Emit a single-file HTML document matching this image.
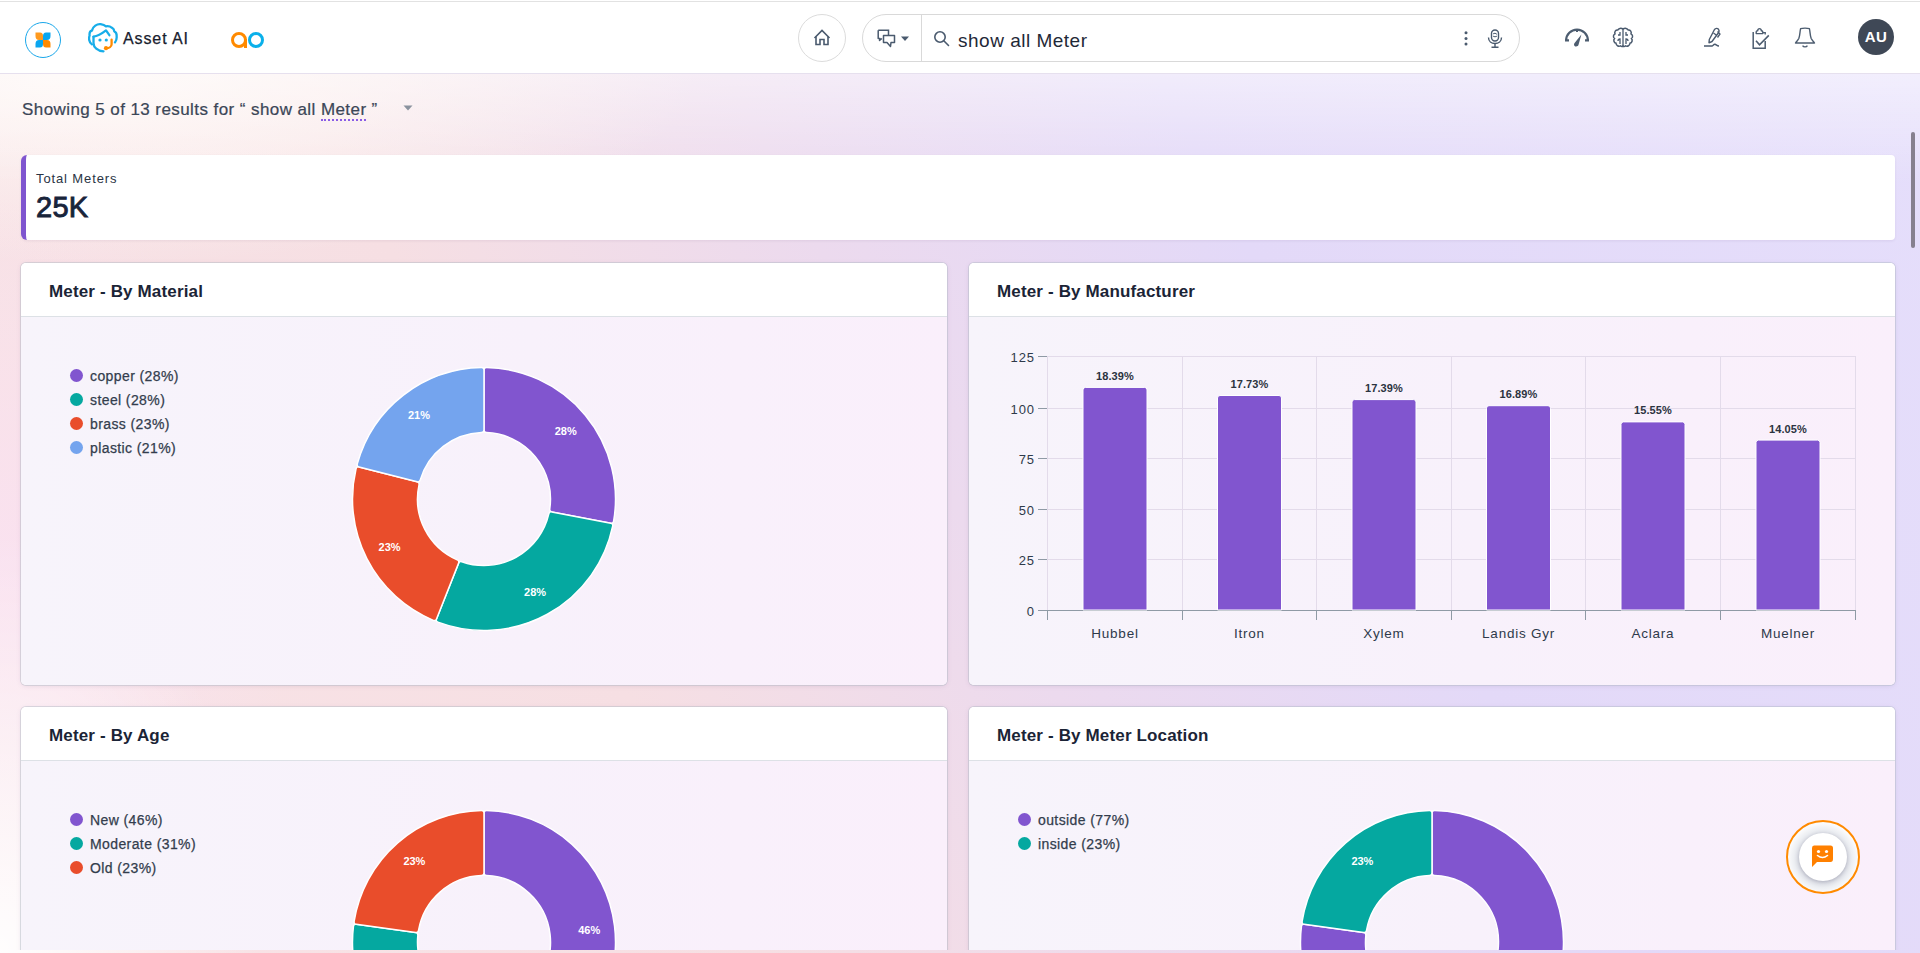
<!DOCTYPE html>
<html><head><meta charset="utf-8"><style>
*{box-sizing:border-box}
html,body{margin:0;padding:0;width:1920px;height:953px;overflow:hidden;font-family:"Liberation Sans", sans-serif;}
body{position:relative;background:#fff}
.abs{position:absolute}
#bg{position:absolute;left:0;top:74px;width:1920px;height:879px;
 background:
  linear-gradient(180deg,rgba(255,255,255,.5) 0px,rgba(255,255,255,0) 110px),
  radial-gradient(ellipse 260px 420px at 0px 879px,rgba(255,255,255,.95),rgba(255,255,255,0)),
  radial-gradient(ellipse 300px 380px at 0px 500px,rgba(250,225,242,.8),rgba(250,225,242,0)),
  radial-gradient(ellipse 600px 190px at 100px 0px,rgba(254,248,245,.95),rgba(254,248,245,0)),
  linear-gradient(62deg,#f9e4e7 0%,#f6dfe3 32%,#ecdaee 50%,#e3d9f8 68%,#e5defb 100%);}
#hdr{position:absolute;left:0;top:0;width:1920px;height:74px;background:#fff;border-bottom:1px solid #e6e0ee}
#topline{position:absolute;left:0;top:1px;width:1920px;height:1px;background:#e2e2e2}
#clip{position:absolute;left:0;top:74px;width:1920px;height:876px;overflow:hidden}
.card{position:absolute;background:#fff;border-radius:5px;box-shadow:0 0 0 1px rgba(175,185,195,.42),0 1px 5px rgba(110,70,120,.13);overflow:hidden}
.ch{position:absolute;left:0;top:0;right:0;height:54px;background:#fff;border-bottom:1px solid #dde1e6}
.ct{position:absolute;left:28px;top:19px;font-size:17px;font-weight:700;color:#1b2436;white-space:nowrap;letter-spacing:.15px}
.cb{position:absolute;left:0;top:54px;right:0;bottom:0;background:linear-gradient(90deg,#f7f4fb 0%,#f8f1fb 55%,#faeffb 100%)}
.leg{position:absolute;font-size:14px;color:#333d4d;white-space:nowrap;letter-spacing:.4px;-webkit-text-stroke:.25px #333d4d}
.leg i{position:absolute;left:-20px;top:1px;width:13px;height:13px;border-radius:50%}
svg text{font-family:"Liberation Sans", sans-serif}
</style></head><body>
<div id="bg"></div>
<div id="hdr"></div>
<div id="topline"></div>


<!-- launcher -->
<div class="abs" style="left:25px;top:22px;width:36px;height:36px;border:1.5px solid #1aa7ea;border-radius:50%"></div>
<svg class="abs" style="left:35px;top:32px" width="16" height="16" viewBox="0 0 16 16">
 <path d="M0.5,0.5 H5 Q8,0.5 8,4 V8 H4 Q0.5,8 0.5,4 Z" fill="#ff9a1f"/>
 <path d="M15.5,0.5 H11 Q8,0.5 8,4 V8 H12 Q15.5,8 15.5,4 Z" fill="#0aa6f0"/>
 <path d="M0.5,15.5 H5 Q8,15.5 8,12 V8 H4 Q0.5,8 0.5,12 Z" fill="#0aa6f0"/>
 <path d="M15.5,15.5 H11 Q8,15.5 8,12 V8 H12 Q15.5,8 15.5,12 Z" fill="#ff8a00"/>
</svg>
<!-- asset ai logo -->
<svg class="abs" style="left:88px;top:23px" width="30" height="30" viewBox="0 0 30 30">
 <path d="M3.9,21.4 C1,19.5 0.6,15 1.6,12.6 C1.2,9.5 2.3,8 3.9,7.6 C5,3.2 9,0.8 12.6,1.2 C14.5,1.5 16.5,2 18,3.3 C20,3 22.5,3.6 24,4.8 C25.8,6 26.3,7 26.2,8.2 C28,9.2 28.8,11 28.6,12.8 C28.9,15.2 28.4,17.5 27,19.4" fill="none" stroke="#17ade9" stroke-width="2.3" stroke-linecap="round" stroke-linejoin="round"/>
 <path d="M5.5,13.8 V20 C5.5,24.2 9.5,28 15.5,28.3" fill="none" stroke="#17ade9" stroke-width="2.3" stroke-linecap="round"/>
 <path d="M5.4,13.7 C10,13.1 14,10.5 18,7.4 L21.4,12.2" fill="none" stroke="#17ade9" stroke-width="2.3" stroke-linecap="round" stroke-linejoin="round"/>
 <circle cx="12" cy="17" r="1.6" fill="#17ade9"/><circle cx="18.3" cy="17" r="1.6" fill="#17ade9"/>
 <path d="M23.6,16.6 V21.2 C23.6,23.6 21,25.2 18.2,25.2" fill="none" stroke="#ff8a00" stroke-width="2.3" stroke-linecap="round"/>
 <circle cx="18" cy="25.2" r="2.1" fill="#ff8a00"/>
</svg>
<div class="abs" style="left:123px;top:30px;font-size:16px;line-height:18px;color:#18202e;letter-spacing:.9px;white-space:nowrap;-webkit-text-stroke:.25px #18202e">Asset AI</div>
<!-- ao logo -->
<svg class="abs" style="left:230px;top:31px" width="36" height="18" viewBox="0 0 36 18">
 <circle cx="9" cy="9" r="6.5" fill="none" stroke="#ff8a00" stroke-width="3"/>
 <rect x="14" y="8" width="3" height="9" fill="#ff8a00"/>
 <circle cx="26" cy="9" r="6.5" fill="none" stroke="#0ab0ea" stroke-width="3"/>
</svg>


<!-- home -->
<div class="abs" style="left:798px;top:14px;width:48px;height:48px;border:1px solid #dcdcdc;border-radius:50%;background:#fff"></div>
<svg class="abs" style="left:812px;top:28px" width="20" height="20" viewBox="0 0 20 20">
 <path d="M2.5,10 L10,2.5 L17.5,10" fill="none" stroke="#4a5a6e" stroke-width="1.6" stroke-linejoin="miter"/>
 <path d="M4,8.5 V16.5 H8 V11.5 H12 V16.5 H16 V8.5" fill="none" stroke="#4a5a6e" stroke-width="1.6"/>
</svg>
<!-- search pill -->
<div class="abs" style="left:862px;top:14px;width:658px;height:48px;border:1px solid #d9d9d9;border-radius:24px;background:#fff"></div>
<div class="abs" style="left:921px;top:15px;width:1px;height:46px;background:#d9d9d9"></div>
<svg class="abs" style="left:877px;top:29px" width="20" height="20" viewBox="0 0 20 20">
 <path d="M1.2,1.2 H11.5 V6" fill="none" stroke="#4a5a6e" stroke-width="1.5"/>
 <path d="M1.2,1.2 V9.5 H3 L2.5,11.5 L5,9.5" fill="none" stroke="#4a5a6e" stroke-width="1.5" stroke-linejoin="round"/>
 <path d="M6.5,6.5 H17.5 V13.5 H14 L13.5,17.5 L10,13.5 H6.5 Z" fill="none" stroke="#4a5a6e" stroke-width="1.5" stroke-linejoin="round"/>
</svg>
<svg class="abs" style="left:900px;top:36px" width="10" height="6" viewBox="0 0 10 6"><path d="M1,0.5 H9 L5,5 Z" fill="#4a5a6e"/></svg>
<svg class="abs" style="left:933px;top:30px" width="17" height="17" viewBox="0 0 17 17">
 <circle cx="7" cy="7" r="5.2" fill="none" stroke="#4a5a6e" stroke-width="1.6"/>
 <path d="M10.8,10.8 L15.5,15.5" stroke="#4a5a6e" stroke-width="1.6" stroke-linecap="round"/>
</svg>
<div class="abs" style="left:958px;top:30px;font-size:19px;line-height:22px;color:#1f2937;letter-spacing:.5px;white-space:nowrap">show all Meter</div>
<svg class="abs" style="left:1462px;top:30px" width="8" height="17" viewBox="0 0 8 17">
 <circle cx="4" cy="2.8" r="1.5" fill="#4a5a6e"/><circle cx="4" cy="8.4" r="1.5" fill="#4a5a6e"/><circle cx="4" cy="14" r="1.5" fill="#4a5a6e"/>
</svg>
<svg class="abs" style="left:1486px;top:29px" width="18" height="20" viewBox="0 0 18 20">
 <rect x="5.5" y="1" width="7" height="11" rx="3.5" fill="none" stroke="#4a5a6e" stroke-width="1.4"/>
 <path d="M2.5,8.5 C2.5,12.5 5.5,14.5 9,14.5 C12.5,14.5 15.5,12.5 15.5,8.5" fill="none" stroke="#4a5a6e" stroke-width="1.4"/>
 <path d="M9,14.5 V18.3 M5.5,18.3 H12.5" stroke="#4a5a6e" stroke-width="1.4"/>
 <path d="M7,5 C8,4 10,4 11,5.5 M7,7 C8,8 10,8 11,7" fill="none" stroke="#4a5a6e" stroke-width="1"/>
</svg>
<!-- gauge -->
<svg class="abs" style="left:1564px;top:26px" width="26" height="22" viewBox="0 0 26 22">
 <path d="M2.1,14.5 A10.9,10.9 0 0 1 23.9,14.5" fill="none" stroke="#4d5d70" stroke-width="2.2"/>
 <path d="M1,14.4 H5 M21,14.4 H25" stroke="#4d5d70" stroke-width="2.2"/>
 <path d="M13,3.5 V6" stroke="#4d5d70" stroke-width="2"/>
 <path d="M17.4,8.6 L14.6,18.6 C14,21.4 9.8,21.2 10,18.3 C10.1,17.4 10.6,16.8 11.2,16.2 Z" fill="#4d5d70"/>
</svg>
<!-- brain -->
<svg class="abs" style="left:1612px;top:27px" width="22" height="21" viewBox="0 0 22 21">
 <path d="M11,2 C9,0.8 6.5,1.3 5.8,3 C3.5,2.8 2.2,5 3,6.8 C1,7.8 1,10.5 2.5,11.5 C1.2,13 1.8,15.8 4,16.2 C4.2,18.5 6.5,19.8 8.5,18.8 C9.5,19.8 10.5,19.8 11,19 C11.5,19.8 12.5,19.8 13.5,18.8 C15.5,19.8 17.8,18.5 18,16.2 C20.2,15.8 20.8,13 19.5,11.5 C21,10.5 21,7.8 19,6.8 C19.8,5 18.5,2.8 16.2,3 C15.5,1.3 13,0.8 11,2 Z" fill="none" stroke="#4a5a6e" stroke-width="1.5"/>
 <path d="M11,2 V19 M8,5 V8 H6 M14,5 V8 H16 M8,17 V12 C6.5,12 6,13.5 6,14 M14,17 V12 C15.5,12 16,13.5 16,14" fill="none" stroke="#4a5a6e" stroke-width="1.3"/>
</svg>
<!-- pen -->
<svg class="abs" style="left:1703px;top:27px" width="20" height="21" viewBox="0 0 20 21">
 <path d="M11.5,2.5 C12.5,1 14.5,1 15.5,2.3 C16.5,3.5 16,5 15.3,6 L9,14.5 L6,15.8 L6.3,12.5 Z" fill="none" stroke="#4a5a6e" stroke-width="1.4" stroke-linejoin="round"/>
 <path d="M14.5,4.5 L17,7 L14.5,10.5 M10.5,6 L13.5,8.2" fill="none" stroke="#4a5a6e" stroke-width="1.3"/>
 <path d="M1,19 H9 C10,19 10.5,17 12,17.2 C13,17.4 14,19 16,19" fill="none" stroke="#4a5a6e" stroke-width="1.4"/>
</svg>
<!-- clipboard -->
<svg class="abs" style="left:1751px;top:27px" width="19" height="23" viewBox="0 0 19 23">
 <path d="M2.2,5 V21.3 H14.2 V14" fill="none" stroke="#4d5d70" stroke-width="1.5"/>
 <path d="M11.8,5.6 H14.2 V7.5" fill="none" stroke="#4d5d70" stroke-width="1.4"/>
 <path d="M5.2,6.6 V5 C5.2,4 5.8,3.8 6.6,3.8 C6.8,2.2 7.6,1.6 8.5,1.6 C9.4,1.6 10.2,2.2 10.4,3.8 C11.2,3.8 11.8,4 11.8,5 V6.6 Z" fill="none" stroke="#4d5d70" stroke-width="1.4" stroke-linejoin="round"/>
 <path d="M5,13.8 L8.5,17.8 L17.8,8.4" fill="none" stroke="#4d5d70" stroke-width="1.6"/>
</svg>
<!-- bell -->
<svg class="abs" style="left:1794px;top:27px" width="22" height="23" viewBox="0 0 22 23">
 <path d="M6.6,1.6 C8.5,0.9 13.5,0.9 15.4,1.6 C16.2,4.5 15.9,8.2 17.2,11.5 C18,13.3 19.6,14.5 20.5,16 H1.5 C2.4,14.5 4,13.3 4.8,11.5 C6.1,8.2 5.8,4.5 6.6,1.6 Z" fill="none" stroke="#4d5d70" stroke-width="1.4" stroke-linejoin="round"/>
 <path d="M8.6,18.6 C9.6,20.3 12.4,20.3 13.4,18.6" fill="none" stroke="#4d5d70" stroke-width="1.4"/>
</svg>
<!-- avatar -->
<div class="abs" style="left:1858px;top:19px;width:36px;height:36px;border-radius:50%;background:#3f4856;color:#fff;font-size:15px;font-weight:700;line-height:36px;text-align:center;letter-spacing:.3px">AU</div>

<div id="clip"><div class="abs" style="left:22px;top:26px;font-size:17px;line-height:20px;color:#3b4657;white-space:nowrap;letter-spacing:.42px;-webkit-text-stroke:.22px #3b4657">Showing 5 of 13 results for “ show all <span style="border-bottom:2px dotted #8a5ce6;padding-bottom:0px">Meter</span> ”</div>
<svg class="abs" style="left:403px;top:31px" width="10" height="6" viewBox="0 0 10 6"><path d="M0.5,0.5 H9.5 L5,5.5 Z" fill="#8a929e"/></svg>

<div class="abs" style="left:21px;top:81px;width:1874px;height:85px;background:#fff;border-radius:6px 4px 4px 6px;border-left:5px solid #7f55cf;box-shadow:0 1px 3px rgba(60,40,90,.08)"></div>
<div class="abs" style="left:36px;top:97px;font-size:13px;line-height:16px;color:#2a3444;letter-spacing:.88px;white-space:nowrap">Total Meters</div>
<div class="abs" style="left:36px;top:117px;font-size:29px;line-height:32px;color:#18243a;font-weight:400;-webkit-text-stroke:.9px #18243a;letter-spacing:.3px;white-space:nowrap">25K</div>

<div class="card" style="left:21px;top:189px;width:926px;height:422px">
<div class="ch"><div class="ct">Meter - By Material</div></div>
<div class="cb"><div class="leg" style="left:69px;top:51px"><i style="background:#8155cf"></i>copper (28%)</div><div class="leg" style="left:69px;top:75px"><i style="background:#05a8a0"></i>steel (28%)</div><div class="leg" style="left:69px;top:99px"><i style="background:#e94d2b"></i>brass (23%)</div><div class="leg" style="left:69px;top:123px"><i style="background:#74a4ee"></i>plastic (21%)</div><svg class="abs" style="left:0;top:0" width="926" height="367"><path d="M463.00,53.00 Q463.00,50.50 465.50,50.52 A131.5,131.5 0 0 1 592.62,204.18 Q592.17,206.64 589.72,206.17 L530.78,194.93 Q528.32,194.46 528.74,192.00 A66.5,66.5 0 0 0 465.50,115.55 Q463.00,115.50 463.00,113.00 Z" fill="#8155cf" stroke="#fff" stroke-width="1.5" stroke-linejoin="round"/>
<text x="544.7" y="118.4" text-anchor="middle" font-size="11" font-weight="700" fill="#fff">28%</text>
<path d="M589.72,206.17 Q592.17,206.64 591.68,209.09 A131.5,131.5 0 0 1 416.92,305.16 Q414.59,304.27 415.51,301.94 L437.60,246.15 Q438.52,243.83 440.86,244.71 A66.5,66.5 0 0 0 527.81,196.91 Q528.32,194.46 530.78,194.93 Z" fill="#05a8a0" stroke="#fff" stroke-width="1.5" stroke-linejoin="round"/>
<text x="514.1" y="278.9" text-anchor="middle" font-size="11" font-weight="700" fill="#fff">28%</text>
<path d="M415.51,301.94 Q414.59,304.27 412.28,303.32 A131.5,131.5 0 0 1 335.03,151.72 Q335.63,149.30 338.05,149.92 L396.17,164.84 Q398.59,165.46 398.01,167.89 A66.5,66.5 0 0 0 436.21,242.87 Q438.52,243.83 437.60,246.15 Z" fill="#e94d2b" stroke="#fff" stroke-width="1.5" stroke-linejoin="round"/>
<text x="368.6" y="234.1" text-anchor="middle" font-size="11" font-weight="700" fill="#fff">23%</text>
<path d="M338.05,149.92 Q335.63,149.30 336.28,146.88 A131.5,131.5 0 0 1 460.50,50.52 Q463.00,50.50 463.00,53.00 L463.00,113.00 Q463.00,115.50 460.50,115.55 A66.5,66.5 0 0 0 399.26,163.05 Q398.59,165.46 396.17,164.84 Z" fill="#74a4ee" stroke="#fff" stroke-width="1.5" stroke-linejoin="round"/>
<text x="398.0" y="102.2" text-anchor="middle" font-size="11" font-weight="700" fill="#fff">21%</text></svg></div></div>
<div class="card" style="left:969px;top:189px;width:926px;height:422px">
<div class="ch"><div class="ct">Meter - By Manufacturer</div></div>
<div class="cb"><svg class="abs" style="left:0;top:0" width="926" height="367"><line x1="69" y1="293.5" x2="79" y2="293.5" stroke="#8f9aa5" stroke-width="1"/><text x="66" y="298.5" text-anchor="end" font-size="13" fill="#2e3a4a" letter-spacing=".9">0</text><line x1="78.5" y1="242.5" x2="886.5" y2="242.5" stroke="#e3dbea" stroke-width="1"/><line x1="69" y1="242.5" x2="79" y2="242.5" stroke="#8f9aa5" stroke-width="1"/><text x="66" y="247.5" text-anchor="end" font-size="13" fill="#2e3a4a" letter-spacing=".9">25</text><line x1="78.5" y1="192.5" x2="886.5" y2="192.5" stroke="#e3dbea" stroke-width="1"/><line x1="69" y1="192.5" x2="79" y2="192.5" stroke="#8f9aa5" stroke-width="1"/><text x="66" y="197.5" text-anchor="end" font-size="13" fill="#2e3a4a" letter-spacing=".9">50</text><line x1="78.5" y1="141.5" x2="886.5" y2="141.5" stroke="#e3dbea" stroke-width="1"/><line x1="69" y1="141.5" x2="79" y2="141.5" stroke="#8f9aa5" stroke-width="1"/><text x="66" y="146.5" text-anchor="end" font-size="13" fill="#2e3a4a" letter-spacing=".9">75</text><line x1="78.5" y1="91.5" x2="886.5" y2="91.5" stroke="#e3dbea" stroke-width="1"/><line x1="69" y1="91.5" x2="79" y2="91.5" stroke="#8f9aa5" stroke-width="1"/><text x="66" y="96.5" text-anchor="end" font-size="13" fill="#2e3a4a" letter-spacing=".9">100</text><line x1="78.5" y1="39.5" x2="886.5" y2="39.5" stroke="#e3dbea" stroke-width="1"/><line x1="69" y1="39.5" x2="79" y2="39.5" stroke="#8f9aa5" stroke-width="1"/><text x="66" y="44.5" text-anchor="end" font-size="13" fill="#2e3a4a" letter-spacing=".9">125</text><line x1="78.5" y1="39" x2="78.5" y2="293" stroke="#e3dbea" stroke-width="1"/><line x1="78.5" y1="293" x2="78.5" y2="303" stroke="#8f9aa5" stroke-width="1"/><line x1="213.5" y1="39" x2="213.5" y2="293" stroke="#e3dbea" stroke-width="1"/><line x1="213.5" y1="293" x2="213.5" y2="303" stroke="#8f9aa5" stroke-width="1"/><line x1="347.5" y1="39" x2="347.5" y2="293" stroke="#e3dbea" stroke-width="1"/><line x1="347.5" y1="293" x2="347.5" y2="303" stroke="#8f9aa5" stroke-width="1"/><line x1="482.5" y1="39" x2="482.5" y2="293" stroke="#e3dbea" stroke-width="1"/><line x1="482.5" y1="293" x2="482.5" y2="303" stroke="#8f9aa5" stroke-width="1"/><line x1="616.5" y1="39" x2="616.5" y2="293" stroke="#e3dbea" stroke-width="1"/><line x1="616.5" y1="293" x2="616.5" y2="303" stroke="#8f9aa5" stroke-width="1"/><line x1="751.5" y1="39" x2="751.5" y2="293" stroke="#e3dbea" stroke-width="1"/><line x1="751.5" y1="293" x2="751.5" y2="303" stroke="#8f9aa5" stroke-width="1"/><line x1="886.5" y1="39" x2="886.5" y2="293" stroke="#e3dbea" stroke-width="1"/><line x1="886.5" y1="293" x2="886.5" y2="303" stroke="#8f9aa5" stroke-width="1"/><line x1="69" y1="293.5" x2="887" y2="293.5" stroke="#8f9aa5" stroke-width="1"/><path d="M114.0,293 V72.9 Q114.0,70.4 116.5,70.4 H175.5 Q178.0,70.4 178.0,72.9 V293 Z" fill="#8155cf" stroke="#fff" stroke-width="1"/><text x="146.0" y="62.9" text-anchor="middle" font-size="11" font-weight="700" fill="#2b3340" letter-spacing=".1">18.39%</text><text x="146.0" y="321" text-anchor="middle" font-size="13.5" fill="#2e3a4a" letter-spacing=".75">Hubbel</text><path d="M248.5,293 V81.0 Q248.5,78.5 251.0,78.5 H310.0 Q312.5,78.5 312.5,81.0 V293 Z" fill="#8155cf" stroke="#fff" stroke-width="1"/><text x="280.5" y="71.0" text-anchor="middle" font-size="11" font-weight="700" fill="#2b3340" letter-spacing=".1">17.73%</text><text x="280.5" y="321" text-anchor="middle" font-size="13.5" fill="#2e3a4a" letter-spacing=".75">Itron</text><path d="M383.0,293 V85.1 Q383.0,82.6 385.5,82.6 H444.5 Q447.0,82.6 447.0,85.1 V293 Z" fill="#8155cf" stroke="#fff" stroke-width="1"/><text x="415.0" y="75.1" text-anchor="middle" font-size="11" font-weight="700" fill="#2b3340" letter-spacing=".1">17.39%</text><text x="415.0" y="321" text-anchor="middle" font-size="13.5" fill="#2e3a4a" letter-spacing=".75">Xylem</text><path d="M517.5,293 V91.2 Q517.5,88.7 520.0,88.7 H579.0 Q581.5,88.7 581.5,91.2 V293 Z" fill="#8155cf" stroke="#fff" stroke-width="1"/><text x="549.5" y="81.2" text-anchor="middle" font-size="11" font-weight="700" fill="#2b3340" letter-spacing=".1">16.89%</text><text x="549.5" y="321" text-anchor="middle" font-size="13.5" fill="#2e3a4a" letter-spacing=".75">Landis Gyr</text><path d="M652.0,293 V107.4 Q652.0,104.9 654.5,104.9 H713.5 Q716.0,104.9 716.0,107.4 V293 Z" fill="#8155cf" stroke="#fff" stroke-width="1"/><text x="684.0" y="97.4" text-anchor="middle" font-size="11" font-weight="700" fill="#2b3340" letter-spacing=".1">15.55%</text><text x="684.0" y="321" text-anchor="middle" font-size="13.5" fill="#2e3a4a" letter-spacing=".75">Aclara</text><path d="M787.0,293 V125.6 Q787.0,123.1 789.5,123.1 H848.5 Q851.0,123.1 851.0,125.6 V293 Z" fill="#8155cf" stroke="#fff" stroke-width="1"/><text x="819.0" y="115.6" text-anchor="middle" font-size="11" font-weight="700" fill="#2b3340" letter-spacing=".1">14.05%</text><text x="819.0" y="321" text-anchor="middle" font-size="13.5" fill="#2e3a4a" letter-spacing=".75">Muelner</text></svg></div></div>
<div class="card" style="left:21px;top:633px;width:926px;height:422px">
<div class="ch"><div class="ct">Meter - By Age</div></div>
<div class="cb"><div class="leg" style="left:69px;top:51px"><i style="background:#8155cf"></i>New (46%)</div><div class="leg" style="left:69px;top:75px"><i style="background:#05a8a0"></i>Moderate (31%)</div><div class="leg" style="left:69px;top:99px"><i style="background:#e94d2b"></i>Old (23%)</div><svg class="abs" style="left:0;top:0" width="926" height="367"><path d="M463.00,52.00 Q463.00,49.50 465.50,49.52 A131.5,131.5 0 0 1 497.32,307.94 Q494.90,308.57 494.30,306.15 L479.74,247.94 Q479.13,245.51 481.55,244.86 A66.5,66.5 0 0 0 465.50,114.55 Q463.00,114.50 463.00,112.00 Z" fill="#8155cf" stroke="#fff" stroke-width="1.5" stroke-linejoin="round"/>
<text x="568.2" y="173.0" text-anchor="middle" font-size="11" font-weight="700" fill="#fff">46%</text>
<path d="M494.30,306.15 Q494.90,308.57 492.47,309.16 A131.5,131.5 0 0 1 332.43,165.36 Q332.75,162.88 335.23,163.23 L394.66,171.49 Q397.13,171.84 396.84,174.32 A66.5,66.5 0 0 0 476.70,246.07 Q479.13,245.51 479.74,247.94 Z" fill="#05a8a0" stroke="#fff" stroke-width="1.5" stroke-linejoin="round"/>
<text x="392.2" y="262.8" text-anchor="middle" font-size="11" font-weight="700" fill="#fff">31%</text>
<path d="M335.23,163.23 Q332.75,162.88 333.12,160.41 A131.5,131.5 0 0 1 460.50,49.52 Q463.00,49.50 463.00,52.00 L463.00,112.00 Q463.00,114.50 460.50,114.55 A66.5,66.5 0 0 0 397.53,169.37 Q397.13,171.84 394.66,171.49 Z" fill="#e94d2b" stroke="#fff" stroke-width="1.5" stroke-linejoin="round"/>
<text x="393.4" y="104.0" text-anchor="middle" font-size="11" font-weight="700" fill="#fff">23%</text></svg></div></div>
<div class="card" style="left:969px;top:633px;width:926px;height:422px">
<div class="ch"><div class="ct">Meter - By Meter Location</div></div>
<div class="cb"><div class="leg" style="left:69px;top:51px"><i style="background:#8155cf"></i>outside (77%)</div><div class="leg" style="left:69px;top:75px"><i style="background:#05a8a0"></i>inside (23%)</div><svg class="abs" style="left:0;top:0" width="926" height="367"><path d="M463.00,52.00 Q463.00,49.50 465.50,49.52 A131.5,131.5 0 1 1 332.43,165.36 Q332.75,162.88 335.23,163.23 L394.66,171.49 Q397.13,171.84 396.84,174.32 A66.5,66.5 0 1 0 465.50,114.55 Q463.00,114.50 463.00,112.00 Z" fill="#8155cf" stroke="#fff" stroke-width="1.5" stroke-linejoin="round"/>
<path d="M335.23,163.23 Q332.75,162.88 333.12,160.41 A131.5,131.5 0 0 1 460.50,49.52 Q463.00,49.50 463.00,52.00 L463.00,112.00 Q463.00,114.50 460.50,114.55 A66.5,66.5 0 0 0 397.53,169.37 Q397.13,171.84 394.66,171.49 Z" fill="#05a8a0" stroke="#fff" stroke-width="1.5" stroke-linejoin="round"/>
<text x="393.4" y="104.0" text-anchor="middle" font-size="11" font-weight="700" fill="#fff">23%</text></svg></div></div>
<div class="abs" style="left:1911px;top:58px;width:4px;height:116px;border-radius:2px;background:#86808f"></div></div>

<div class="abs" style="left:1786px;top:820px;width:74px;height:74px;border-radius:50%;border:2px solid #ff8a00;background:radial-gradient(circle at 50% 52%,#c9ccd6 0,#d6d8e0 24px,#eceef2 29px,#fbfbfc 35px)"></div>
<div class="abs" style="left:1799px;top:833px;width:48px;height:48px;border-radius:50%;background:#fff;box-shadow:0 1px 3px rgba(40,40,70,.18)"></div>
<svg class="abs" style="left:1811px;top:845px" width="23" height="24" viewBox="0 0 23 24">
 <path d="M3,0.5 H19.5 Q22,0.5 22,3 V14 Q22,17 19.5,17 H6 L1,22 V3 Q1,0.5 3,0.5 Z" fill="#ff8000"/>
 <circle cx="7.5" cy="6.5" r="1.6" fill="#fff"/><circle cx="15.5" cy="6.5" r="1.6" fill="#fff"/>
 <path d="M6.5,10.5 Q11.5,14.5 16.5,10.5" fill="none" stroke="#fff" stroke-width="1.6" stroke-linecap="round"/>
</svg>

</body></html>
